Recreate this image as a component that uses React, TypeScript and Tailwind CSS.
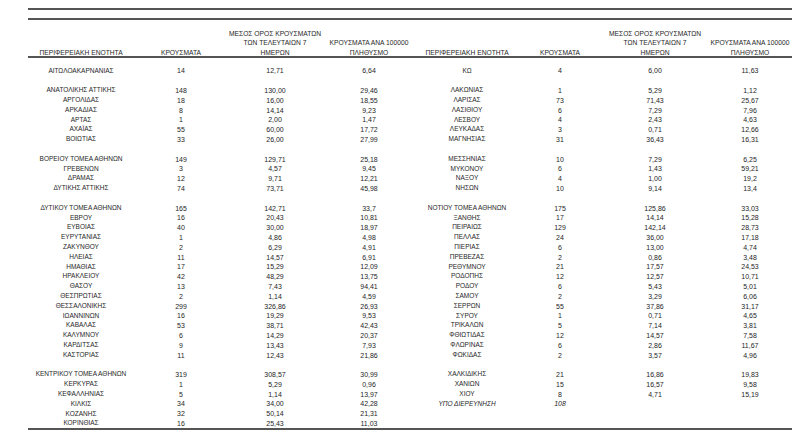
import React from "react";

type Row = [string, string, string, string, boolean?] | null;

const left: Row[] = [
  ["ΑΙΤΩΛΟΑΚΑΡΝΑΝΙΑΣ", "14", "12,71", "6,64"],
  null,
  ["ΑΝΑΤΟΛΙΚΗΣ ΑΤΤΙΚΗΣ", "148", "130,00", "29,46"],
  ["ΑΡΓΟΛΙΔΑΣ", "18", "16,00", "18,55"],
  ["ΑΡΚΑΔΙΑΣ", "8", "14,14", "9,23"],
  ["ΑΡΤΑΣ", "1", "2,00", "1,47"],
  ["ΑΧΑΪΑΣ", "55", "60,00", "17,72"],
  ["ΒΟΙΩΤΙΑΣ", "33", "26,00", "27,99"],
  null,
  ["ΒΟΡΕΙΟΥ ΤΟΜΕΑ ΑΘΗΝΩΝ", "149", "129,71", "25,18"],
  ["ΓΡΕΒΕΝΩΝ", "3", "4,57", "9,45"],
  ["ΔΡΑΜΑΣ", "12", "9,71", "12,21"],
  ["ΔΥΤΙΚΗΣ ΑΤΤΙΚΗΣ", "74", "73,71", "45,98"],
  null,
  ["ΔΥΤΙΚΟΥ ΤΟΜΕΑ ΑΘΗΝΩΝ", "165", "142,71", "33,7"],
  ["ΕΒΡΟΥ", "16", "20,43", "10,81"],
  ["ΕΥΒΟΙΑΣ", "40", "30,00", "18,97"],
  ["ΕΥΡΥΤΑΝΙΑΣ", "1", "4,86", "4,98"],
  ["ΖΑΚΥΝΘΟΥ", "2", "6,29", "4,91"],
  ["ΗΛΕΙΑΣ", "11", "14,57", "6,91"],
  ["ΗΜΑΘΙΑΣ", "17", "15,29", "12,09"],
  ["ΗΡΑΚΛΕΙΟΥ", "42", "48,29", "13,75"],
  ["ΘΑΣΟΥ", "13", "7,43", "94,41"],
  ["ΘΕΣΠΡΩΤΙΑΣ", "2", "1,14", "4,59"],
  ["ΘΕΣΣΑΛΟΝΙΚΗΣ", "299", "326,86", "26,93"],
  ["ΙΩΑΝΝΙΝΩΝ", "16", "19,29", "9,53"],
  ["ΚΑΒΑΛΑΣ", "53", "38,71", "42,43"],
  ["ΚΑΛΥΜΝΟΥ", "6", "14,29", "20,37"],
  ["ΚΑΡΔΙΤΣΑΣ", "9", "13,43", "7,93"],
  ["ΚΑΣΤΟΡΙΑΣ", "11", "12,43", "21,86"],
  null,
  ["ΚΕΝΤΡΙΚΟΥ ΤΟΜΕΑ ΑΘΗΝΩΝ", "319", "308,57", "30,99"],
  ["ΚΕΡΚΥΡΑΣ", "1", "5,29", "0,96"],
  ["ΚΕΦΑΛΛΗΝΙΑΣ", "5", "1,14", "13,97"],
  ["ΚΙΛΚΙΣ", "34", "34,00", "42,28"],
  ["ΚΟΖΑΝΗΣ", "32", "50,14", "21,31"],
  ["ΚΟΡΙΝΘΙΑΣ", "16", "25,43", "11,03"],
];

const right: Row[] = [
  ["ΚΩ", "4", "6,00", "11,63"],
  null,
  ["ΛΑΚΩΝΙΑΣ", "1", "5,29", "1,12"],
  ["ΛΑΡΙΣΑΣ", "73", "71,43", "25,67"],
  ["ΛΑΣΙΘΙΟΥ", "6", "7,29", "7,96"],
  ["ΛΕΣΒΟΥ", "4", "2,43", "4,63"],
  ["ΛΕΥΚΑΔΑΣ", "3", "0,71", "12,66"],
  ["ΜΑΓΝΗΣΙΑΣ", "31", "36,43", "16,31"],
  null,
  ["ΜΕΣΣΗΝΙΑΣ", "10", "7,29", "6,25"],
  ["ΜΥΚΟΝΟΥ", "6", "1,43", "59,21"],
  ["ΝΑΞΟΥ", "4", "1,00", "19,2"],
  ["ΝΗΣΩΝ", "10", "9,14", "13,4"],
  null,
  ["ΝΟΤΙΟΥ ΤΟΜΕΑ ΑΘΗΝΩΝ", "175", "125,86", "33,03"],
  ["ΞΑΝΘΗΣ", "17", "14,14", "15,28"],
  ["ΠΕΙΡΑΙΩΣ", "129", "142,14", "28,73"],
  ["ΠΕΛΛΑΣ", "24", "36,00", "17,18"],
  ["ΠΙΕΡΙΑΣ", "6", "13,00", "4,74"],
  ["ΠΡΕΒΕΖΑΣ", "2", "0,86", "3,48"],
  ["ΡΕΘΥΜΝΟΥ", "21", "17,57", "24,53"],
  ["ΡΟΔΟΠΗΣ", "12", "12,57", "10,71"],
  ["ΡΟΔΟΥ", "6", "5,43", "5,01"],
  ["ΣΑΜΟΥ", "2", "3,29", "6,06"],
  ["ΣΕΡΡΩΝ", "55", "37,86", "31,17"],
  ["ΣΥΡΟΥ", "1", "0,71", "4,65"],
  ["ΤΡΙΚΑΛΩΝ", "5", "7,14", "3,81"],
  ["ΦΘΙΩΤΙΔΑΣ", "12", "14,57", "7,58"],
  ["ΦΛΩΡΙΝΑΣ", "6", "2,86", "11,67"],
  ["ΦΩΚΙΔΑΣ", "2", "3,57", "4,96"],
  null,
  ["ΧΑΛΚΙΔΙΚΗΣ", "21", "16,86", "19,83"],
  ["ΧΑΝΙΩΝ", "15", "16,57", "9,58"],
  ["ΧΙΟΥ", "8", "4,71", "15,19"],
  ["ΥΠΟ ΔΙΕΡΕΥΝΗΣΗ", "108", "", "", true],
  null,
  null,
];

const GRID =
  "grid grid-cols-[106px_94px_94px_94px_102px_84px_106px_84px]";

function Cells({ r }: { r: Row }) {
  if (!r) {
    return (
      <>
        <div />
        <div />
        <div />
        <div />
      </>
    );
  }
  const it = r[4] ? "italic" : "";
  return (
    <>
      <div className={`flex items-center justify-center whitespace-nowrap text-[6.5px] leading-none ${it}`}>
        {r[0]}
      </div>
      <div className={`flex items-center justify-center whitespace-nowrap text-[7px] leading-none ${it}`}>
        {r[1]}
      </div>
      <div className="flex items-center justify-center whitespace-nowrap text-[7px] leading-none">
        {r[2]}
      </div>
      <div className="flex items-center justify-center whitespace-nowrap text-[7px] leading-none">
        {r[3]}
      </div>
    </>
  );
}

function HeaderCells() {
  const c =
    "flex flex-col items-center justify-end whitespace-nowrap text-[6.7px] leading-[9.5px] translate-y-[1px]";
  return (
    <>
      <div className={c}>
        <span>ΠΕΡΙΦΕΡΕΙΑΚΗ ΕΝΟΤΗΤΑ</span>
      </div>
      <div className={c}>
        <span>ΚΡΟΥΣΜΑΤΑ</span>
      </div>
      <div className={c}>
        <span>ΜΕΣΟΣ ΟΡΟΣ ΚΡΟΥΣΜΑΤΩΝ</span>
        <span>ΤΩΝ ΤΕΛΕΥΤΑΙΩΝ 7</span>
        <span>ΗΜΕΡΩΝ</span>
      </div>
      <div className={c}>
        <span>ΚΡΟΥΣΜΑΤΑ ΑΝΑ 100000</span>
        <span>ΠΛΗΘΥΣΜΟ</span>
      </div>
    </>
  );
}

export default function App() {
  return (
    <div
      className="w-[800px] h-[437px] bg-white overflow-hidden pt-[8px] pl-[28px] text-[#262626]"
      style={{ fontFamily: '"Liberation Sans", Arial, sans-serif' }}
    >
      <div className="w-[764px]">
        <div className="h-[2px] bg-[#555555]" />
        <div className="h-[8px]" />
        <div className="h-[2px] bg-[#555555]" />
        <div className={`${GRID} h-[36px]`}>
          <HeaderCells />
          <HeaderCells />
        </div>
        <div className="h-[2px] bg-[#555555]" />
        <div className="h-[8px]" />
        {left.map((l, i) => (
          <div key={i} className={`${GRID} h-[9.8px]`}>
            <Cells r={l} />
            <Cells r={right[i]} />
          </div>
        ))}
        <div className="h-[2px] bg-[#555555]" />
      </div>
    </div>
  );
}
